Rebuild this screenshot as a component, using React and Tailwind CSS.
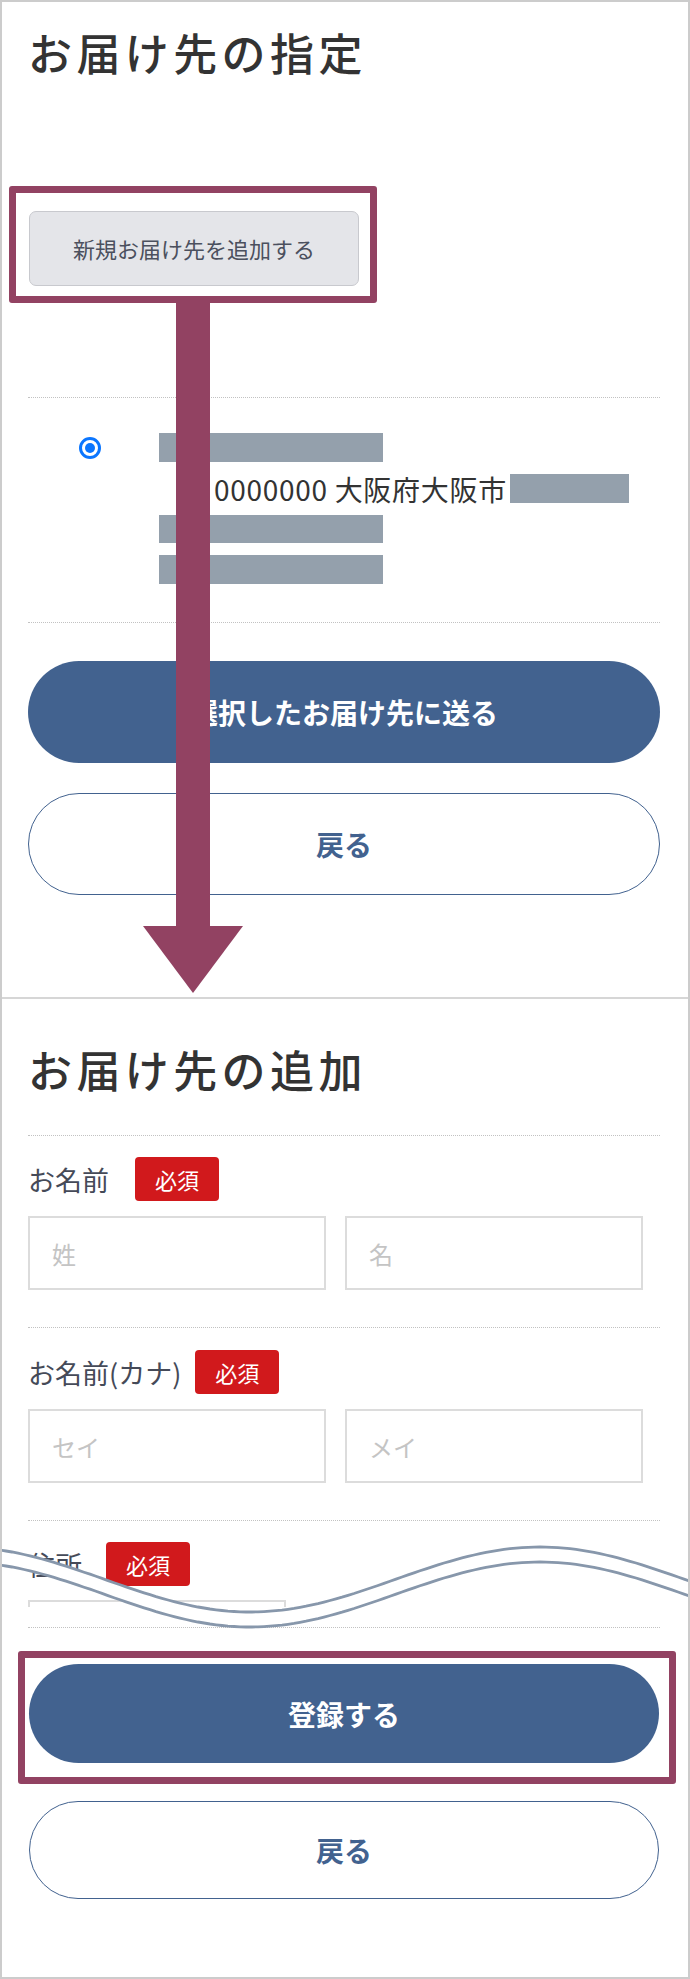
import React from 'react';

const FONT = "font-['Noto_Sans_CJK_JP','Noto_Sans',sans-serif]";

function Dotted({ className = '' }) {
    return <div className={`h-0 border-t border-dotted border-[#c2c2c2] ${className}`} />;
}

function Badge({ className = '' }) {
    return (
        <span className={`flex items-center justify-center w-[84px] h-[44px] rounded-[4px] bg-[#d1191c] text-white text-[22px] leading-none ${className}`}>
            必須
        </span>
    );
}

function Field({ label, badgeGap, placeholders, className = '' }) {
    return (
        <div className={className}>
            <div className="flex items-center h-[44px]">
                <span className="text-[27px] leading-none text-[#454a58]">{label}</span>
                <Badge className={badgeGap} />
            </div>
            <div className="flex gap-[19px] mt-[15px]">
                {placeholders.map((p) => (
                    <input
                        key={p}
                        readOnly
                        placeholder={p}
                        className={`w-[298px] h-[74px] border-2 border-[#dcdcdc] bg-white pl-[22px] text-[24px] outline-none placeholder:text-[#c4c4c4] ${FONT}`}
                    />
                ))}
            </div>
        </div>
    );
}

function wavePath(offset) {
    const pts = [];
    for (let x = 0; x <= 690; x += 6) {
        const y = 49.5 + offset + 32.5 * Math.cos((2 * Math.PI * (x - 250)) / 580);
        pts.push([x, y]);
    }
    return pts;
}

function Wave() {
    const upper = wavePath(0);
    const lower = wavePath(15);
    const line = (pts) => 'M' + pts.map(([x, y]) => `${x},${y.toFixed(1)}`).join(' L');
    const band =
        line(upper) +
        ' L' +
        [...lower].reverse().map(([x, y]) => `${x},${y.toFixed(1)}`).join(' L') +
        ' Z';
    return (
        <svg className="absolute left-[-2px] top-[1528px]" width="690" height="110" viewBox="0 0 690 110">
            <path d={band} fill="#ffffff" />
            <path d={line(upper)} fill="none" stroke="#8797ab" strokeWidth="2.8" />
            <path d={line(lower)} fill="none" stroke="#8797ab" strokeWidth="2.8" />
        </svg>
    );
}

export default function App() {
    return (
        <div className={`relative w-[690px] h-[1979px] bg-white border-2 border-[#cccccc] overflow-hidden text-[#333] ${FONT}`}>
            {/* お届け先の指定 */}
            <section className="pl-[26px] pr-[28px] pt-[28px] pb-[102px]">
                <h2 className="text-[44px] leading-none font-medium tracking-[0.1em]">お届け先の指定</h2>

                <button className="mt-[137px] ml-[1px] w-[330px] h-[75px] rounded-[7px] border border-[#c8c9ce] bg-[#e4e5e9] text-[22px] text-[#4b505e]">
                    新規お届け先を追加する
                </button>

                <Dotted className="mt-[111px]" />

                <div className="flex mt-[35px]">
                    <div className="ml-[51px] mt-[4px] w-[22px] h-[22px] rounded-full border-[3px] border-[#0b76ff] flex items-center justify-center">
                        <div className="w-[10px] h-[10px] rounded-full bg-[#0b76ff]" />
                    </div>
                    <div className="ml-[58px] flex flex-col gap-[12px]">
                        <div className="w-[224px] h-[29px] bg-[#94a0ac]" />
                        <div className="flex items-center h-[29px]">
                            <span className="ml-[55px] text-[28px] leading-none tracking-[0.025em]">0000000 大阪府大阪市</span>
                            <div className="ml-[3px] w-[119px] h-[29px] bg-[#94a0ac]" />
                        </div>
                        <div className="w-[224px] h-[28px] bg-[#94a0ac]" />
                        <div className="w-[224px] h-[29px] bg-[#94a0ac]" />
                    </div>
                </div>

                <Dotted className="mt-[38px]" />

                <button className="mt-[38px] w-full h-[102px] rounded-full bg-[#42628f] text-white text-[28px] font-bold">
                    選択したお届け先に送る
                </button>
                <button className="mt-[30px] w-full h-[102px] rounded-full border-[1.5px] border-[#42628f] bg-white text-[#42628f] text-[28px] font-bold">
                    戻る
                </button>
            </section>

            <div className="h-[2px] bg-[#d6d6d6]" />

            {/* お届け先の追加 */}
            <section className="pl-[26px] pr-[28px] pt-[48px]">
                <h2 className="text-[44px] leading-none font-medium tracking-[0.1em]">お届け先の追加</h2>

                <Dotted className="mt-[44px]" />
                <Field label="お名前" badgeGap="ml-[26px]" placeholders={['姓', '名']} className="mt-[21px]" />

                <Dotted className="mt-[37px]" />
                <Field label="お名前(カナ)" badgeGap="ml-[14px]" placeholders={['セイ', 'メイ']} className="mt-[22px]" />

                <Dotted className="mt-[37px]" />
                <div className="mt-[21px] flex items-center h-[44px]">
                    <span className="text-[27px] leading-none text-[#454a58]">住所</span>
                    <Badge className="ml-[24px]" />
                </div>
                <div className="mt-[14px] w-[258px] h-[7px] border-t-2 border-x-2 border-[#dcdcdc]" />

                <Dotted className="mt-[20px]" />

                <button className="mt-[36px] ml-[1px] w-[630px] h-[99px] rounded-full bg-[#42628f] text-white text-[28px] font-bold">
                    登録する
                </button>
                <button className="mt-[38px] ml-[1px] w-[630px] h-[98px] rounded-full border-[1.5px] border-[#42628f] bg-white text-[#42628f] text-[28px] font-bold">
                    戻る
                </button>
            </section>

            {/* annotations */}
            <div className="absolute left-[7px] top-[184px] w-[368px] h-[117px] border-[7px] border-[#924262] rounded-[3px]" />
            <svg className="absolute left-[141px] top-[294px]" width="100" height="697" viewBox="0 0 100 697">
                <rect x="33" y="0" width="34" height="632" fill="#924262" />
                <path d="M0,630 L100,630 L50,697 Z" fill="#924262" />
            </svg>
            <Wave />
            <div className="absolute left-[16px] top-[1649px] w-[658px] h-[133px] border-[7px] border-[#924262] rounded-[3px]" />
        </div>
    );
}
